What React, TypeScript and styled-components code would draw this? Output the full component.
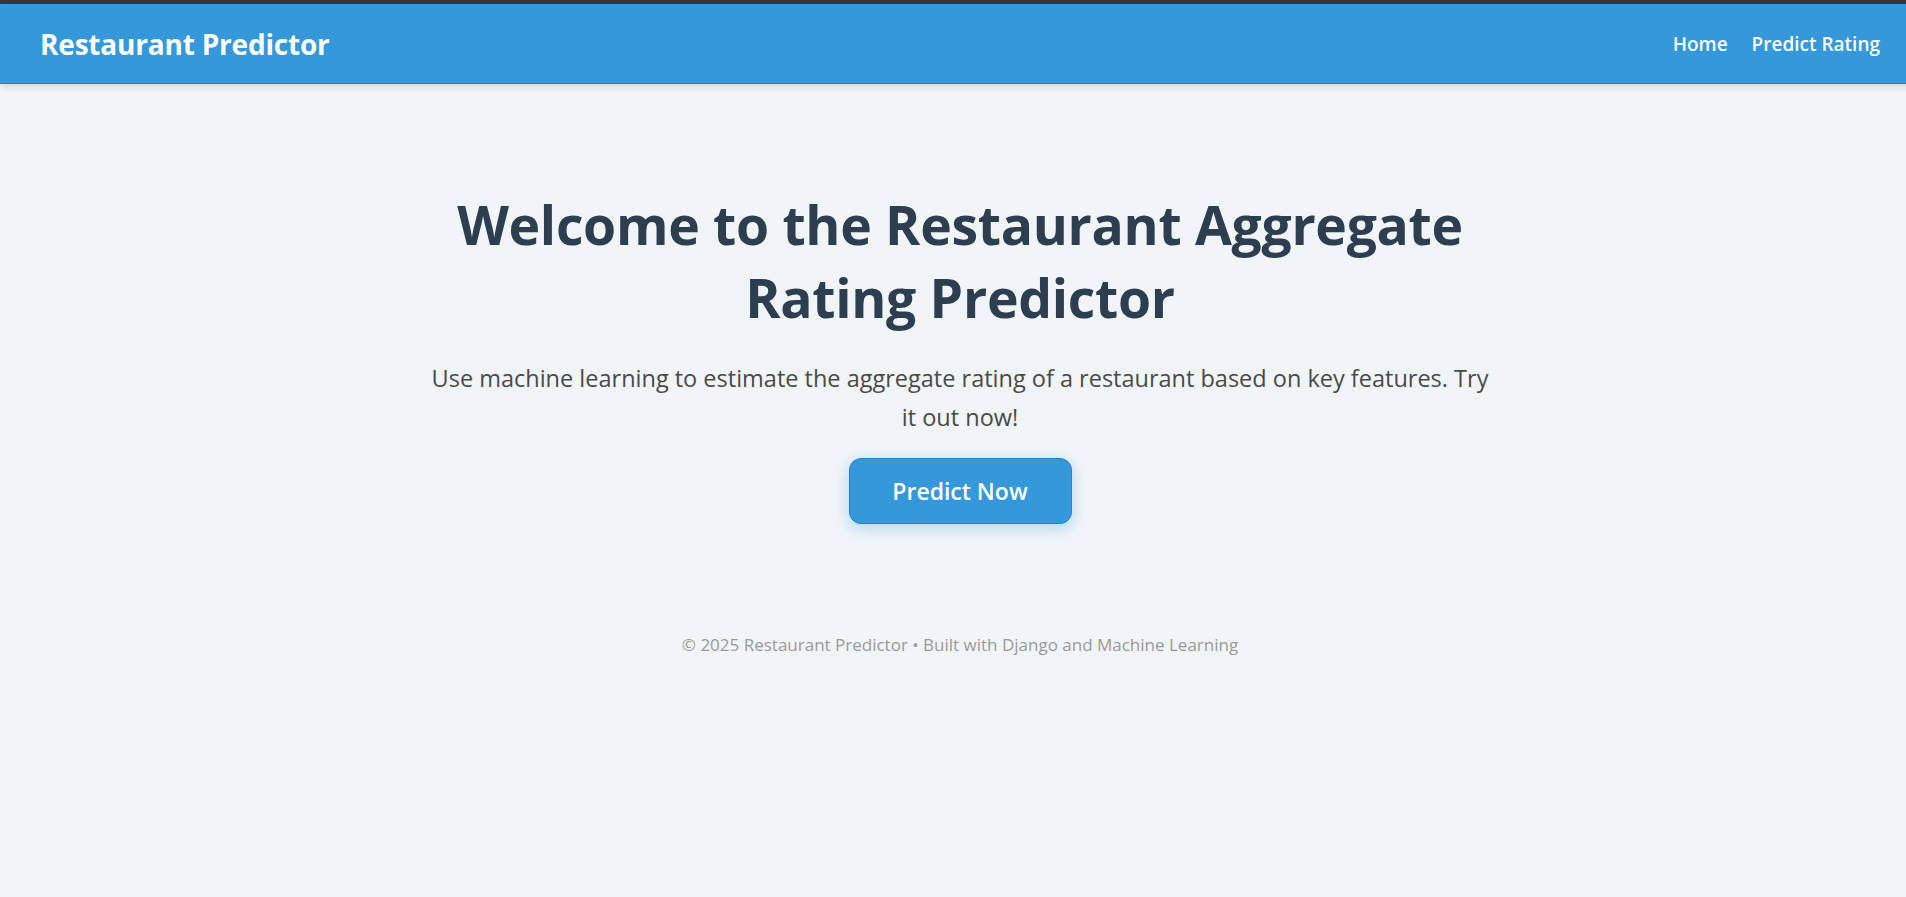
import React from "react";
import styled, { createGlobalStyle } from "styled-components";

const GlobalStyle = createGlobalStyle`
  html, body {
    margin: 0;
    padding: 0;
    background: #f1f5f8;
    font-family: "Open Sans", "Noto Sans", sans-serif;
    overflow-x: hidden;
  }
  * { box-sizing: border-box; }
`;

const Page = styled.div`
  width: 1920px;
  min-height: 897px;
  display: flex;
  flex-direction: column;
  background: #f1f5f8;
`;

const TopStrip = styled.div`
  height: 4px;
  background: #3c3837;
`;

const NavBar = styled.header`
  height: 80px;
  background: #3498db;
  border-bottom: 1px solid #1f86cf;
  box-shadow: 0 2px 8px rgba(0, 0, 0, 0.15);
  display: flex;
  align-items: center;
  justify-content: space-between;
  padding: 0 28px 0 40px;
`;

const Brand = styled.a`
  color: #ffffff;
  font-size: 28px;
  font-weight: 700;
  text-decoration: none;
  letter-spacing: -0.2px;
`;

const NavLinks = styled.nav`
  display: flex;
  align-items: center;
`;

const NavLink = styled.a`
  color: #ffffff;
  font-size: 19px;
  font-weight: 600;
  text-decoration: none;
  padding: 8px 12px;
`;

const Hero = styled.main`
  width: 1064px;
  margin: 0 auto;
  padding: 104px 0 0;
  text-align: center;
`;

const Title = styled.h1`
  margin: 0;
  font-size: 53.5px;
  line-height: 73px;
  font-weight: 700;
  color: #2c3e50;
  letter-spacing: -0.3px;
`;

const Lead = styled.p`
  margin: 25px 0 0;
  font-size: 23.5px;
  line-height: 39px;
  color: #4a4a4a;
`;

const CTA = styled.a`
  display: inline-block;
  margin-top: 21px;
  width: 223px;
  height: 66px;
  line-height: 64px;
  border-radius: 12px;
  background: #3498db;
  border: 1px solid #1f86cf;
  box-shadow: 0 4px 16px rgba(52, 152, 219, 0.35);
  color: #ffffff;
  font-size: 23px;
  font-weight: 600;
  text-decoration: none;
`;

const Footer = styled.footer`
  margin-top: 110px;
  text-align: center;
  font-size: 17px;
  line-height: 22px;
  color: #9a9a9a;
`;

export default function App() {
  return (
    <>
      <GlobalStyle />
      <Page>
        <TopStrip />
        <NavBar>
          <Brand href="#">Restaurant Predictor</Brand>
          <NavLinks>
            <NavLink href="#">Home</NavLink>
            <NavLink href="#">Predict Rating</NavLink>
          </NavLinks>
        </NavBar>
        <Hero>
          <Title>Welcome to the Restaurant Aggregate Rating Predictor</Title>
          <Lead>
            Use machine learning to estimate the aggregate rating of a restaurant based on key features. Try it out now!
          </Lead>
          <CTA href="#">Predict Now</CTA>
        </Hero>
        <Footer>© 2025 Restaurant Predictor • Built with Django and Machine Learning</Footer>
      </Page>
    </>
  );
}
